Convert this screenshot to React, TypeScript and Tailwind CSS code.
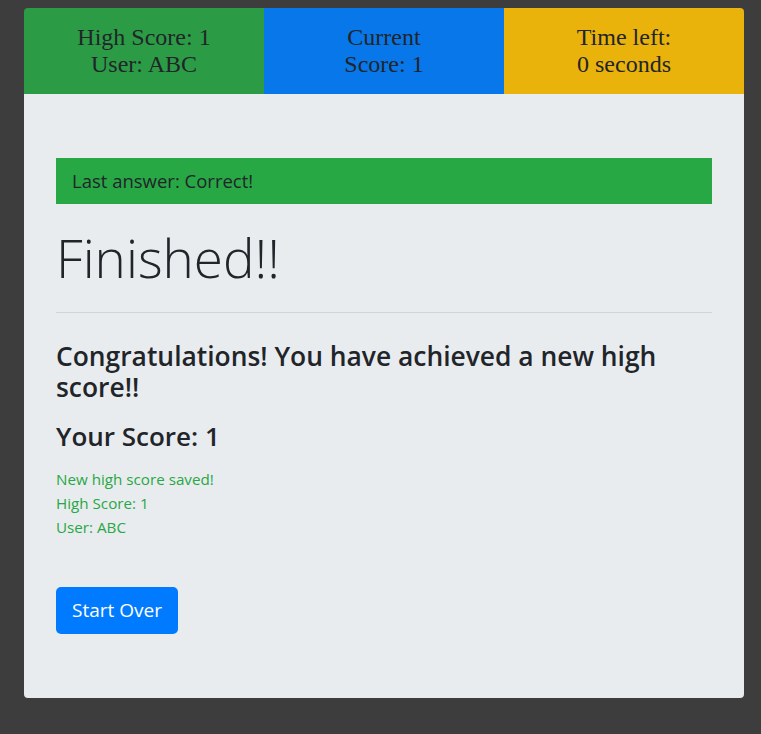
export default function App() {
  return (
    <div className="min-h-screen bg-[#3d3d3d] px-6 pt-2 pb-9 font-['Open_Sans',sans-serif] text-[#212529]">
      <div className="w-[720px] overflow-hidden rounded">
        <div className="grid grid-cols-3 font-['Liberation_Serif',serif] text-[24px] leading-[27px] text-center text-[#212529]">
          <div className="bg-[#2b9c45] py-4">
            <div>High Score: 1</div>
            <div>User: ABC</div>
          </div>
          <div className="bg-[#0777ea] py-4">
            <div>Current</div>
            <div>Score: 1</div>
          </div>
          <div className="bg-[#eab30c] py-4">
            <div>Time left:</div>
            <div>0 seconds</div>
          </div>
        </div>

        <div className="bg-[#e9ecef] px-8 pt-16 pb-16">
          <div className="flex h-[46px] items-center bg-[#28a745] px-4 text-[18.5px]">
            Last answer: Correct!
          </div>

          <h1 className="mt-5 text-[53px] font-light leading-[68px]">Finished!!</h1>

          <hr className="mt-5 border-t border-black/10" />

          <h3 className="mt-7 text-[26.4px] font-semibold leading-[31px]">
            Congratulations! You have achieved a new high score!!
          </h3>
          <h3 className="mt-[18px] text-[26px] font-semibold leading-[31px]">Your Score: 1</h3>

          <div className="mt-[15px] text-[15.2px] leading-6 text-[#28a745]">
            <div>New high score saved!</div>
            <div>High Score: 1</div>
            <div>User: ABC</div>
          </div>

          <button className="mt-12 h-[47px] rounded-[5px] bg-[#007bff] px-4 text-[19px] text-white">
            Start Over
          </button>
        </div>
      </div>
    </div>
  );
}
